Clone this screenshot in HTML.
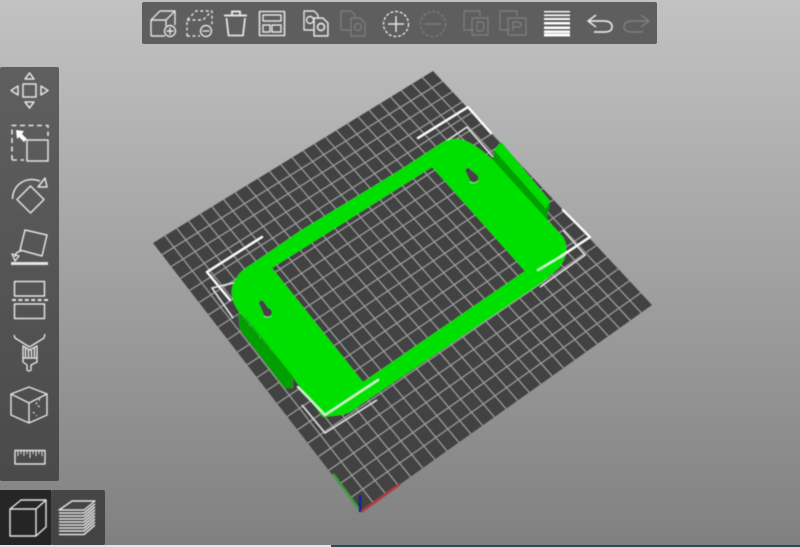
<!DOCTYPE html>
<html><head><meta charset="utf-8"><style>
html,body{margin:0;padding:0;width:800px;height:547px;overflow:hidden;background:#888}
svg{position:absolute;left:0;top:0;display:block}
</style></head><body>
<svg width="800" height="547" viewBox="0 0 800 547" xmlns="http://www.w3.org/2000/svg">
<defs>
<linearGradient id="bg" x1="0" y1="0" x2="0" y2="1"><stop offset="0" stop-color="#c2c2c2"/><stop offset="1" stop-color="#808080"/></linearGradient>
<filter id="b" x="-5%" y="-5%" width="110%" height="110%"><feGaussianBlur stdDeviation="0.5"/></filter>
</defs>
<rect width="800" height="547" fill="url(#bg)"/>
<rect x="0" y="545" width="331" height="2" fill="#e4e4e4"/>
<rect x="331" y="545" width="469" height="2" fill="#2c4a5c"/>

<g filter="url(#b)">
<polygon points="433,71 652,305 361,512 153,243" fill="#424242"/>
<path id="grid" d="" stroke="#a4a4a4" stroke-width="0.95" fill="none"/>
<polyline points="333,474 361,512" stroke="#3f9c3f" stroke-width="2.5" fill="none"/>
<polyline points="361,512 400,484" stroke="#b03a3a" stroke-width="2.5" fill="none"/>
<polyline points="360,512 360,495" stroke="#1a1a90" stroke-width="2.5" fill="none"/>

<g fill="none" stroke="#eee" stroke-width="1.2">
<polyline points="445,142 467,127 493,157"/>
<polyline points="563,230 585,255 540,287"/>
<polyline points="237,282 212,288 233,318"/>
<polyline points="302,405 325,433 377,400"/>
</g>

<polygon points="493,160 494,150 501,142 550,201 547,219 540,214" fill="#00a000"/>
<polygon points="494,150 501,142 550,201 546,209" fill="#00dc00"/>
<polygon points="238,312 240,330 284,388 293,388 293,377" fill="#00a000"/>
<path fill-rule="evenodd" fill="#00e000" d="M243,270 L300,231 L400,170 L443,142 Q457,135 470,143 Q478,147 493,160 L563,237 Q571,250 560,267 L543,282 L360,405 Q350,414 340,415 L323,417 L300,387 L293,377 L240,313 Q222,290 243,270 Z M272,268 L363,382 L525,271 L432,167 Z"/>
<polyline points="245,317 293,377" stroke="#00b000" stroke-width="1" fill="none"/>

<g fill="#444" stroke="none">
<circle cx="261.5" cy="303" r="2.6"/><circle cx="267.5" cy="312.5" r="4.5"/><polygon points="259.5,304.5 263.5,301.5 269,309 264,315"/>
<circle cx="468" cy="170.5" r="2.6"/><circle cx="474" cy="178" r="4.5"/><polygon points="466,172 470,169 476,174 470,181"/>
</g>
<g fill="none" stroke="#cfe9cf" stroke-width=".7" opacity=".8">
<path d="M264,316 Q268,318 271,316"/><path d="M470,182 Q474,184 478,181"/>
</g>

<g fill="none" stroke="#fff" stroke-width="2.1" stroke-linecap="round" stroke-linejoin="round">
<polyline points="418,138 468,107 491,133"/>
<polyline points="563,210 590,237 560,257"/>
<polyline points="262,237 207,272 230,300"/>
</g>
<g fill="none" stroke="#d0f5d0" stroke-width="2.1" stroke-linecap="round" stroke-linejoin="round">
<polyline points="298,387 325,415 378,380"/>
<line x1="560" y1="257" x2="538" y2="270"/>
</g>
</g>

<!-- toolbars -->
<rect x="142" y="2" width="515" height="42" rx="2" fill="#5e5e5e"/>
<rect x="0" y="67" width="59" height="414" rx="2" fill="#1e1e1e" fill-opacity=".58"/>
<rect x="51" y="490" width="54" height="55" rx="2" fill="#1e1e1e" fill-opacity=".62"/>
<rect x="0" y="490" width="51" height="55" fill="#151515" fill-opacity=".85"/>

<g filter="url(#b)" fill="none" stroke="#e4e4e4" stroke-width="1.4" stroke-linejoin="round">
<!-- top bar -->
<path d="M151,36 V20 L160,11 H175 V25 M151,20 H166 L175,11 M166,20 V26 M151,36 H165"/>
<circle cx="170" cy="31" r="5.5"/><path d="M170,27.5 V34.5 M166.5,31 H173.5"/>
<path stroke-dasharray="3 2.5" d="M187,36 V20 L196,11 H212 V25 M187,20 H203 L212,11 M187,36 H200"/>
<circle cx="206" cy="31" r="5.5"/><path d="M202.5,31 H209.5"/>
<path stroke-width="2" d="M224,15.5 H247 M232,15 V11.5 H240 V15"/>
<path stroke-width="1.8" d="M226.5,18 L228.5,35.5 H243 L245,18"/>
<rect x="259.5" y="11.5" width="25" height="24" stroke-width="1.6"/>
<rect x="263" y="15" width="18" height="6"/><rect x="263" y="25" width="7" height="7"/><rect x="272" y="25" width="9" height="7"/>
<path d="M314,30 H304 V11 H314 L318,15 V18"/>
<circle cx="310" cy="20" r="3.5"/>
<path d="M314,18 H323 L328,23 V36 H314 Z" fill="#5e5e5e"/>
<circle cx="321" cy="27" r="3.5"/>
<g opacity=".22">
<path d="M351,30 H341 V11 H351 L355,15 V18"/>
<path d="M351,18 H360 L365,23 V36 H351 Z"/><circle cx="358" cy="27" r="3.5"/>
</g>
<circle cx="396" cy="24" r="12.5" stroke-dasharray="3 1.8"/><path stroke-width="1.5" d="M396,16 V32 M388,24 H404"/>
<g opacity=".22">
<circle cx="433" cy="24" r="12.5" stroke-dasharray="3 1.8"/><path stroke-width="1.5" d="M425,24 H441"/>
<path d="M474,30 H464 V11 H480 V16 M472,18 H488 V35 H472 Z"/>
<path d="M510,30 H500 V11 H517 V16 M508,18 H526 V35 H508 Z"/>
<path d="M477,22 V31 H481 Q484,31 484,26.5 Q484,22 481,22 Z M513,31 V22 H518 Q521,22 521,24.5 Q521,27 518,27 H513"/>
</g>
<g stroke="none" fill="#fff">
<rect x="544" y="11" width="26" height="1.4"/><rect x="544" y="14.5" width="26" height="1.6"/><rect x="544" y="18" width="26" height="2"/><rect x="544" y="22" width="26" height="2.5"/><rect x="544" y="26.5" width="26" height="2.6"/><rect x="544" y="30.5" width="26" height="2.6"/><rect x="544" y="33.5" width="26" height="3"/>
</g>
<path stroke-width="1.7" d="M596,15 L588,21 L596,27 M588,21 H604 Q612,21 612,27 Q612,32 604,32 H594"/>
<path opacity=".22" stroke-width="1.7" d="M641,15 L649,21 L641,27 M649,21 H633 Q624,21 624,27 Q624,32 633,32 H643"/>

<!-- left bar -->
<rect x="23" y="84" width="13" height="13" stroke-width="1.5"/>
<path d="M29.5,73 L25,79 H34 Z M29.5,108 L25,102 H34 Z M11,90.5 L18,86 V95 Z M48,90.5 L41,86 V95 Z" stroke-width="1.5"/>
<path stroke-width="1.6" stroke-dasharray="5 3.5" d="M12,160 V125.5 H48 V136 M12,160 H24"/>
<rect x="27" y="140" width="21" height="21" stroke-width="1.5"/>
<path d="M16,130 L24,131 L22,134 L27,139 L24,142 L19,137 L17,139 Z" fill="#fff" stroke="none"/>
<path stroke-width="1.5" d="M30.5,186 L44,199.5 L30.5,213 L17,199.5 Z"/>
<path stroke-width="1.5" d="M12.5,199 C13,185 25,176 40,181"/>
<path stroke-width="1.5" d="M38,187 L47,187 L45,178 Z"/>
<path stroke-width="1.5" d="M25,230 L47,235 L42,256 L20,250 Z"/>
<path stroke-width="3" d="M11,263.5 H48"/>
<path d="M21,251 Q15,252 15,257 M12,254 L15,261 L19,256 Z"/>
<rect x="14.5" y="281.5" width="30" height="14.5" stroke-width="1.5"/>
<rect x="14.5" y="304" width="30" height="14.5" stroke-width="1.5"/>
<path stroke-width="2" stroke-dasharray="4 2.4" d="M12,300 H48"/>
<path stroke-width="1.4" d="M14,335 L15,338 L29.5,347 L44,338 L45,334"/>
<path d="M23,346 L29.5,350 L37,346 V358 H23 Z M25.5,348 V357 M28.5,350 V357 M31.5,350 V357 M34.5,348 V357"/>
<path d="M23,358 V362 L27,365 V370 Q29,372 31,370 V365 L37,362 V358"/>
<path stroke-width="1.4" d="M29,387 L47,394 V415 L29,423 L11,415 V394 Z M11,394 L29,403 L47,394 M29,403 V423"/>
<path stroke-width="1.2" stroke-dasharray="2 2.5" d="M40,399 L36,404 L41,408 M33,412 L37,416"/>
<rect x="15" y="450.5" width="30" height="13.5" stroke-width="1.4"/>
<path stroke-width="1" d="M18,450 V456 M21,450 V454 M24,450 V456 M27,450 V454 M30,450 V458 M33,450 V454 M36,450 V456 M39,450 V454 M42,450 V456"/>

<!-- bottom bar -->
<path stroke-width="1.4" d="M10,509 H36 V536 H10 Z M10,509 L21,500 H46 L36,509 M46,500 V527 L36,536"/>
<path stroke-width="1.4" d="M59,510 L72,501 H95 L84,510 Z"/>
<path stroke-width="1.5" d="M59,513 H84 L95,504 M59,516 H84 L95,507 M59,519 H84 L95,510 M59,522 H84 L95,513 M59,525 H84 L95,516 M59,528 H84 L95,519 M59,531 H84 L95,522 M59,534.5 H84 L95,525"/>
</g>
</svg>
<script>
(function(){
var x0=361,y0=512,x1=652,y1=305,x2=433,y2=71,x3=153,y3=243;
var dx1=x1-x2,dx2=x3-x2,sx=x0-x1+x2-x3,dy1=y1-y2,dy2=y3-y2,sy=y0-y1+y2-y3;
var d=dx1*dy2-dx2*dy1,g=(sx*dy2-dx2*sy)/d,h=(dx1*sy-sx*dy1)/d;
var a=x1-x0+g*x1,b=x3-x0+h*x3,c=x0,e=y1-y0+g*y1,f=y3-y0+h*y3,i=y0;
function P(u,v){var w=g*u+h*v+1;return ((a*u+b*v+c)/w).toFixed(1)+','+((e*u+f*v+i)/w).toFixed(1);}
var s='',k;
for(k=1;k<25;k++){s+='M'+P(k/25,0)+'L'+P(k/25,1);}
for(k=1;k<21;k++){s+='M'+P(0,k/21)+'L'+P(1,k/21);}
document.getElementById('grid').setAttribute('d',s);
})();
</script>
</body></html>
